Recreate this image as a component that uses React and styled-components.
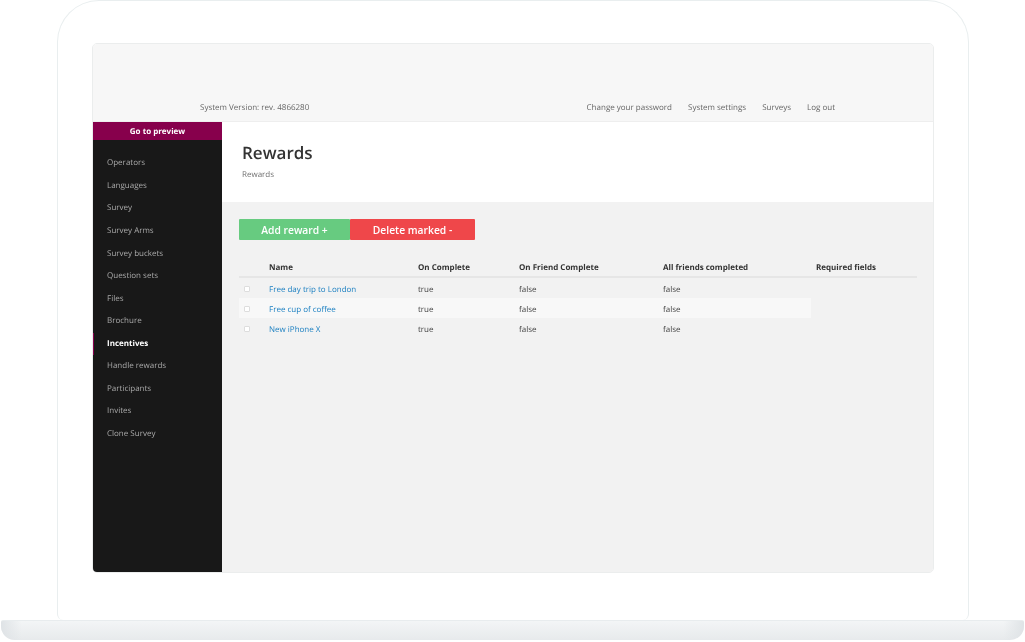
import React from "react";
import styled, { createGlobalStyle } from "styled-components";

const GlobalStyle = createGlobalStyle`
  html, body {
    margin: 0;
    padding: 0;
    background: #fff;
  }
  body {
    font-family: "Open Sans", "Liberation Sans", sans-serif;
    text-rendering: geometricPrecision;
  }
  * {
    box-sizing: border-box;
  }
`;

const Page = styled.div`
  width: 1025px;
  height: 642px;
  overflow: hidden;
  will-change: transform;
`;

const Lid = styled.div`
  width: 912px;
  height: 620px;
  margin-left: 57px;
  padding: 42px 33px 0 35px;
  border: 1px solid #e9eeef;
  border-bottom: 0;
  border-radius: 42px 42px 6px 6px;
`;

const Base = styled.div`
  width: 1023px;
  height: 20px;
  margin-left: 1px;
  border-radius: 2px 2px 14px 14px;
  background:
    linear-gradient(90deg, #dfe3e6, rgba(255, 255, 255, 0) 2%, rgba(255, 255, 255, 0) 98%, #dfe3e6),
    linear-gradient(#f3f5f6, #e7eaec);
  border-top: 1px solid #e8ecee;
`;

const Screen = styled.div`
  width: 842px;
  height: 530px;
  margin-left: -1px;
  display: flex;
  flex-direction: column;
  border: 1px solid #ebeded;
  border-radius: 5px;
  overflow: hidden;
`;

const Header = styled.header`
  height: 78px;
  flex: none;
  padding: 0 98px 6px 107px;
  display: flex;
  align-items: flex-end;
  justify-content: space-between;
  background: #f7f7f7;
  border-bottom: 1px solid #eeeeee;
  font-size: 8px;
  line-height: 14px;
  color: #666;
`;

const TopNav = styled.nav`
  display: flex;
  gap: 16px;
`;

const TopLink = styled.a`
  color: #666;
`;

const Body = styled.div`
  flex: 1;
  display: flex;
  min-height: 0;
`;

const Sidebar = styled.aside`
  width: 129px;
  flex: none;
  background: #181818;
`;

const PreviewButton = styled.div`
  height: 18px;
  padding-top: 1px;
  background: #87004c;
  color: #fff;
  font-size: 8px;
  font-weight: 700;
  line-height: 18px;
  text-align: center;
`;

const SideNav = styled.nav`
  padding-top: 12.4px;
`;

const SideLink = styled.a`
  display: block;
  height: 22.55px;
  padding-left: 13px;
  font-size: 8px;
  font-weight: ${(p) => (p.$active ? 700 : 400)};
  line-height: 22.55px;
  color: ${(p) => (p.$active ? "#fff" : "#a9a9a9")};
  border-left: 1px solid ${(p) => (p.$active ? "#87004c" : "transparent")};
`;

const Main = styled.main`
  flex: 1;
  display: flex;
  flex-direction: column;
  background: #f2f2f2;
`;

const TitleBar = styled.div`
  height: 80px;
  flex: none;
  padding: 18px 20px 0;
  background: #fff;
`;

const Title = styled.h1`
  margin: 0;
  font-size: 17px;
  font-weight: 600;
  line-height: 25px;
  color: #333;
`;

const Crumb = styled.div`
  margin-top: 4px;
  font-size: 8px;
  line-height: 12px;
  color: #707070;
`;

const Content = styled.div`
  padding: 17px 17px 0;
`;

const Actions = styled.div`
  display: flex;
`;

const ActionButton = styled.button`
  width: ${(p) => p.$width}px;
  height: 21px;
  padding: 0;
  border: 0;
  border-radius: 1px;
  background: ${(p) => p.$color};
  color: #fff;
  font-family: inherit;
  font-size: 10.3px;
  font-weight: 600;
`;

const Table = styled.table`
  width: 678px;
  margin-top: 18px;
  border-collapse: collapse;
  table-layout: fixed;
  font-size: 8px;
`;

const HeadCell = styled.th`
  width: ${(p) => p.$width}px;
  height: 19px;
  padding: 0 0 0 ${(p) => p.$inset || 0}px;
  text-align: left;
  font-weight: 700;
  color: #333;
  border-bottom: 2px solid #e6e6e6;
`;

const Row = styled.tr`
  height: 20px;
  &:first-child {
    height: 21px;
  }
`;

const Cell = styled.td`
  padding: 2px 0 0;
  color: #444;
  background: ${(p) => (p.$striped ? "#f8f8f8" : "transparent")};
`;

const CheckCell = styled(Cell)`
  padding-left: 5px;
`;

const Box = styled.span`
  display: block;
  width: 6px;
  height: 6px;
  background: #fff;
  border: 1px solid #dddddd;
  border-radius: 1px;
`;

const RowLink = styled.a`
  color: #1a7fc1;
`;

const menu = [
  "Operators",
  "Languages",
  "Survey",
  "Survey Arms",
  "Survey buckets",
  "Question sets",
  "Files",
  "Brochure",
  "Incentives",
  "Handle rewards",
  "Participants",
  "Invites",
  "Clone Survey",
];

const rewards = ["Free day trip to London", "Free cup of coffee", "New iPhone X"];

export default function App() {
  return (
    <Page>
      <GlobalStyle />
      <Lid>
        <Screen>
          <Header>
            <span>System Version: rev. 4866280</span>
            <TopNav>
              <TopLink>Change your password</TopLink>
              <TopLink>System settings</TopLink>
              <TopLink>Surveys</TopLink>
              <TopLink>Log out</TopLink>
            </TopNav>
          </Header>
          <Body>
            <Sidebar>
              <PreviewButton>Go to preview</PreviewButton>
              <SideNav>
                {menu.map((item) => (
                  <SideLink key={item} $active={item === "Incentives"}>
                    {item}
                  </SideLink>
                ))}
              </SideNav>
            </Sidebar>
            <Main>
              <TitleBar>
                <Title>Rewards</Title>
                <Crumb>Rewards</Crumb>
              </TitleBar>
              <Content>
                <Actions>
                  <ActionButton $width={111} $color="#67cb80">
                    Add reward +
                  </ActionButton>
                  <ActionButton $width={125} $color="#ef474a">
                    Delete marked -
                  </ActionButton>
                </Actions>
                <Table>
                  <thead>
                    <tr>
                      <HeadCell $width={30} />
                      <HeadCell $width={149}>Name</HeadCell>
                      <HeadCell $width={101}>On Complete</HeadCell>
                      <HeadCell $width={144}>On Friend Complete</HeadCell>
                      <HeadCell $width={148}>All friends completed</HeadCell>
                      <HeadCell $width={106} $inset={5}>
                        Required fields
                      </HeadCell>
                    </tr>
                  </thead>
                  <tbody>
                    {rewards.map((name, i) => (
                      <Row key={name}>
                        <CheckCell $striped={i === 1}>
                          <Box />
                        </CheckCell>
                        <Cell $striped={i === 1}>
                          <RowLink>{name}</RowLink>
                        </Cell>
                        <Cell $striped={i === 1}>true</Cell>
                        <Cell $striped={i === 1}>false</Cell>
                        <Cell $striped={i === 1}>false</Cell>
                      </Row>
                    ))}
                  </tbody>
                </Table>
              </Content>
            </Main>
          </Body>
        </Screen>
      </Lid>
      <Base />
    </Page>
  );
}
